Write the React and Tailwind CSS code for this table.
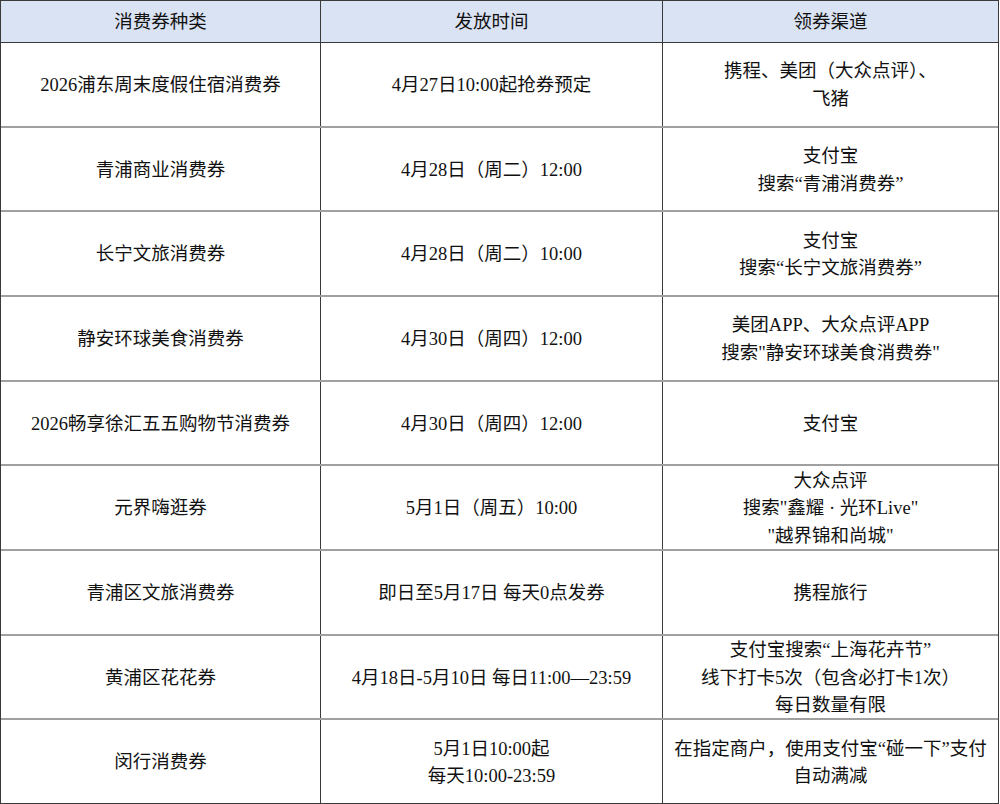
import React from "react";

const rows = [
  ["2026浦东周末度假住宿消费券", ["4月27日10:00起抢券预定"], ["携程、美团（大众点评）、", "飞猪"]],
  ["青浦商业消费券", ["4月28日（周二）12:00"], ["支付宝", "搜索“青浦消费券”"]],
  ["长宁文旅消费券", ["4月28日（周二）10:00"], ["支付宝", "搜索“长宁文旅消费券”"]],
  ["静安环球美食消费券", ["4月30日（周四）12:00"], ["美团APP、大众点评APP", "搜索\"静安环球美食消费券\""]],
  ["2026畅享徐汇五五购物节消费券", ["4月30日（周四）12:00"], ["支付宝"]],
  ["元界嗨逛券", ["5月1日（周五）10:00"], ["大众点评", "搜索\"鑫耀 · 光环Live\"", "\"越界锦和尚城\""]],
  ["青浦区文旅消费券", ["即日至5月17日 每天0点发券"], ["携程旅行"]],
  ["黄浦区花花券", ["4月18日-5月10日 每日11:00—23:59"], ["支付宝搜索“上海花卉节”", "线下打卡5次（包含必打卡1次）", "每日数量有限"]],
  ["闵行消费券", ["5月1日10:00起", "每天10:00-23:59"], ["在指定商户，使用支付宝“碰一下”支付", "自动满减"]],
];

function Cell({ lines, last }) {
  return (
    <div
      className={
        "flex flex-col items-center justify-center text-center leading-[27.5px] pt-[3px] min-h-0 " +
        (last ? "" : "border-r border-[#3a3a3a]")
      }
    >
      {lines.map((l, i) => (
        <div key={i} className="whitespace-pre">{l}</div>
      ))}
    </div>
  );
}

export default function App() {
  return (
    <div
      className="w-[1000px] h-[804px] bg-white text-[#111] text-[18.5px]"
      style={{ fontFamily: '"Liberation Serif", "Noto Sans CJK SC", serif' }}
    >
      <div className="w-[999px] h-[804px] border border-[#3a3a3a] flex flex-col">
        <div className="grid grid-cols-[320px_342px_1fr] h-[42px] shrink-0 bg-[#dae3f3] border-b border-[#3a3a3a]">
          <Cell lines={["消费券种类"]} />
          <Cell lines={["发放时间"]} />
          <Cell lines={["领券渠道"]} last />
        </div>
        {rows.map((r, i) => (
          <div
            key={i}
            className={
              "grid grid-cols-[320px_342px_1fr] flex-1 basis-0 min-h-0 " +
              (i < rows.length - 1 ? "border-b-2 border-[#a0a0a0]" : "")
            }
          >
            <Cell lines={[r[0]]} />
            <Cell lines={r[1]} />
            <Cell lines={r[2]} last />
          </div>
        ))}
      </div>
    </div>
  );
}
